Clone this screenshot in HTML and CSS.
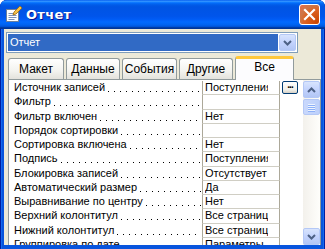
FILE: index.html
```html
<!DOCTYPE html>
<html>
<head>
<meta charset="UTF-8">
<link rel="stylesheet" href="styles.css">
</head>
<body>

<div class="window">

    <div class="titlebar">
        <svg class="appicon" width="16" height="16" viewBox="0 0 16 16">
            <rect x="0.5" y="3.5" width="12" height="12" fill="#fff" stroke="#6a7f9c"/>
            <line x1="2.5" y1="7.5" x2="10.5" y2="7.5" stroke="#7c93b8"/>
            <line x1="2.5" y1="9.5" x2="10.5" y2="9.5" stroke="#7c93b8"/>
            <line x1="2.5" y1="11.5" x2="10.5" y2="11.5" stroke="#7c93b8"/>
            <line x1="2.5" y1="13.5" x2="8.5" y2="13.5" stroke="#7c93b8"/>
            <polygon points="8,6 14,0 16,2 10,8 7,9" fill="#f4c24a" stroke="#9a6a12" stroke-width="0.8"/>
        </svg>
        <span class="title">Отчет</span>
        <div class="closebtn">
            <svg width="21" height="21" viewBox="0 0 21 21">
                <path d="M6 6 L15 15 M15 6 L6 15" stroke="#fff" stroke-width="2.2" stroke-linecap="square"/>
            </svg>
        </div>
    </div>

    <div class="client">

        <div class="combo">
            <div class="combo-text">Отчет</div>
            <div class="xpbtn combo-btn">
                <svg width="9" height="6" viewBox="0 0 9 6"><polyline points="1,1 4.5,4.5 8,1" fill="none" stroke="#4d6185" stroke-width="2"/></svg>
            </div>
        </div>

        <div class="tabs">
            <div class="tab" style="width: 56px">Макет</div>
            <div class="tab" style="width: 54px">Данные</div>
            <div class="tab" style="width: 55px">События</div>
            <div class="tab" style="width: 54px">Другие</div>
            <div class="tab active" style="width: 59px">Все</div>
        </div>

        <div class="panel">
            <div class="grid">
                <div class="row">
                    <div class="label"><span>Источник записей</span><i class="leader"></i></div>
                    <div class="value"><span>Поступления</span></div>
                    <div class="builder"><div class="dots">...</div></div>
                </div>
                <div class="row">
                    <div class="label"><span>Фильтр</span><i class="leader"></i></div>
                    <div class="value"><span></span></div>
                    <div class="builder"></div>
                </div>
                <div class="row">
                    <div class="label"><span>Фильтр включен</span><i class="leader"></i></div>
                    <div class="value"><span>Нет</span></div>
                    <div class="builder"></div>
                </div>
                <div class="row">
                    <div class="label"><span>Порядок сортировки</span><i class="leader"></i></div>
                    <div class="value"><span></span></div>
                    <div class="builder"></div>
                </div>
                <div class="row">
                    <div class="label"><span>Сортировка включена</span><i class="leader"></i></div>
                    <div class="value"><span>Нет</span></div>
                    <div class="builder"></div>
                </div>
                <div class="row">
                    <div class="label"><span>Подпись</span><i class="leader"></i></div>
                    <div class="value"><span>Поступления</span></div>
                    <div class="builder"></div>
                </div>
                <div class="row">
                    <div class="label"><span>Блокировка записей</span><i class="leader"></i></div>
                    <div class="value"><span>Отсутствует</span></div>
                    <div class="builder"></div>
                </div>
                <div class="row">
                    <div class="label"><span>Автоматический размер</span><i class="leader"></i></div>
                    <div class="value"><span>Да</span></div>
                    <div class="builder"></div>
                </div>
                <div class="row">
                    <div class="label"><span>Выравнивание по центру</span><i class="leader"></i></div>
                    <div class="value"><span>Нет</span></div>
                    <div class="builder"></div>
                </div>
                <div class="row">
                    <div class="label"><span>Верхний колонтитул</span><i class="leader"></i></div>
                    <div class="value"><span>Все страницы</span></div>
                    <div class="builder"></div>
                </div>
                <div class="row">
                    <div class="label"><span>Нижний колонтитул</span><i class="leader"></i></div>
                    <div class="value"><span>Все страницы</span></div>
                    <div class="builder"></div>
                </div>
                <div class="row">
                    <div class="label"><span>Группировка по дате</span><i class="leader"></i></div>
                    <div class="value"><span>Параметры</span></div>
                    <div class="builder"></div>
                </div>
            </div>

            <div class="scrollbar">
                <div class="xpbtn sb-btn">
                    <svg width="9" height="6" viewBox="0 0 9 6"><polyline points="1,5 4.5,1.5 8,5" fill="none" stroke="#4d6185" stroke-width="2"/></svg>
                </div>
                <div class="track">
                    <div class="thumb">
                        <span></span><span></span><span></span><span></span>
                    </div>
                </div>
                <div class="xpbtn sb-btn">
                    <svg width="9" height="6" viewBox="0 0 9 6"><polyline points="1,1 4.5,4.5 8,1" fill="none" stroke="#4d6185" stroke-width="2"/></svg>
                </div>
            </div>
        </div>

    </div>

</div>

</body>
</html>
```

FILE: styles.css
```css
html, body {
    margin: 0;
    padding: 0;
    background: #fff;
}

body {
    width: 325px;
    height: 249px;
    overflow: hidden;
    font-family: 'Liberation Sans', Arial, sans-serif;
    font-size: 11px;
}

.window {
    height: 249px;
    box-sizing: border-box;
    display: flex;
    flex-direction: column;
    background: #0855dd;
    border-radius: 7px 7px 0 0;
    padding: 0 4px 4px 4px;
    box-shadow: inset 1px 0 #001ea0, inset -1px 0 #001ea0, inset 2px 0 #166aee, inset -2px 0 #166aee;
}

.titlebar {
    height: 29px;
    margin: 0 -4px;
    padding: 0 6px;
    display: flex;
    align-items: center;
    border-radius: 7px 7px 0 0;
    background: linear-gradient(to bottom, #0058ee 0%, #3593ff 4%, #288eff 6%, #127dff 8%, #036ffc 10%, #0262ee 14%, #0057e5 20%, #0054e3 24%, #0055eb 56%, #005bf5 66%, #026afe 76%, #0062ef 86%, #0052d6 92%, #0040ab 94%, #003092 100%);
}

.appicon {
    margin: 0 4px 2px 0;
}

.title {
    flex: 1;
    color: #fff;
    font-family: 'DejaVu Sans', sans-serif;
    font-weight: bold;
    font-size: 13px;
    text-shadow: 1px 1px #0f1089;
    letter-spacing: 0.3px;
}

.closebtn {
    width: 21px;
    height: 21px;
    border: 1px solid #fff;
    border-radius: 3px;
    background: radial-gradient(circle at 90% 90%, #cc4600 0%, #dc6527 55%, #cd7546 70%, #e76d4b 100%);
    background-color: #e04a2b;
    margin-right: -1px;
    box-sizing: border-box;
}

.closebtn svg {
    display: block;
    margin: -1px;
}

.client {
    flex: 1;
    background: #ece9d8;
    padding: 3px 2px 0 2px;
    display: flex;
    flex-direction: column;
    overflow: hidden;
}

/* combo */
.combo {
    width: 292px;
    height: 21px;
    box-sizing: border-box;
    border: 1px solid #7f9db9;
    background: #fff;
    padding: 1px;
    display: flex;
}

.combo-text {
    flex: 1;
    background: #316ac5;
    color: #fff;
    padding-left: 2px;
    line-height: 17px;
}

.xpbtn {
    background: linear-gradient(to bottom, #d8e4fd, #c3d3fd 50%, #b2c6f5);
    border: 1px solid #b4c8f6;
    border-radius: 2px;
    box-sizing: border-box;
    display: flex;
    align-items: center;
    justify-content: center;
}

.combo-btn {
    width: 17px;
    margin-left: 1px;
}

/* tabs */
.tabs {
    display: flex;
    gap: 2px;
    margin-top: 3px;
    padding-left: 2px;
    height: 23px;
    align-items: flex-end;
    position: relative;
    z-index: 2;
}

.tab {
    height: 21px;
    box-sizing: border-box;
    border: 1px solid #919b9c;
    border-bottom: none;
    border-radius: 3px 3px 0 0;
    background: linear-gradient(to bottom, #fff, #f3f3ef 60%, #e3e2dc);
    text-align: center;
    line-height: 20px;
    color: #000;
    font-size: 12px;
}

.tab.active {
    height: 24px;
    margin-bottom: -1px;
    background: #fcfcfe;
    border-top: 3px solid #ffc83c;
    box-shadow: inset 0 -1px #fcfcfe;
    line-height: 17px;
    border-radius: 3px 3px 0 0;
}

/* tab page */
.panel {
    flex: 1;
    margin: 0 0 0 2px;
    width: 313px;
    box-sizing: border-box;
    border: 1px solid #919b9c;
    border-bottom: none;
    background: #fff;
    display: flex;
    overflow: hidden;
}

.grid {
    flex: 1;
    padding-top: 1px;
}

.row {
    display: flex;
    height: 14.25px;
    line-height: 13px;
}

.label {
    width: 188px;
    padding-left: 5px;
    display: flex;
    white-space: nowrap;
    color: #000;
}

.leader {
    flex: 1;
    margin: 0 1px 0 3px;
    background-image: linear-gradient(to right, #000 1px, transparent 1px);
    background-size: 6px 1px;
    background-repeat: repeat-x;
    background-position: left 10px;
}

.value {
    width: 78px;
    height: 100%;
    border-left: 1px solid #aca899;
    border-right: 1px solid #aca899;
    border-bottom: 1px solid #d0cec4;
    padding-left: 2px;
    box-sizing: border-box;
}

.value span {
    display: block;
    width: 63px;
    white-space: nowrap;
    overflow: hidden;
}

.builder {
    flex: 1;
    padding-left: 2px;
}

.dots {
    width: 16px;
    height: 13px;
    box-sizing: border-box;
    border: 1px solid #003c74;
    border-radius: 2px;
    background: linear-gradient(to bottom, #fff, #f0f0ea 70%, #d6d0c5);
    font-weight: bold;
    font-size: 10px;
    line-height: 6px;
    text-align: center;
    letter-spacing: -1px;
}

/* scrollbar */
.scrollbar {
    width: 17px;
    display: flex;
    flex-direction: column;
    background: linear-gradient(to right, #f3f1ec, #fefefb);
    padding-top: 1px;
}

.sb-btn {
    height: 17px;
}

.track {
    flex: 1;
    padding-top: 1px;
}

.thumb {
    height: 16px;
    box-sizing: border-box;
    border: 1px solid #b4c8f6;
    border-radius: 2px;
    background: linear-gradient(to right, #c9d8fc, #bcd0fb);
    display: flex;
    flex-direction: column;
    align-items: center;
    justify-content: center;
    gap: 1px;
}

.thumb span {
    width: 7px;
    height: 1px;
    background: #eef4fe;
    box-shadow: 0 1px #8cb0f8;
}
```
